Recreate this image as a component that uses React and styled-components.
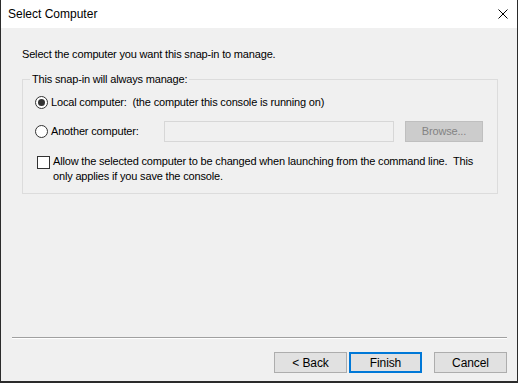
import React, { useState } from 'react';
import styled, { createGlobalStyle } from 'styled-components';

const GlobalStyle = createGlobalStyle`
    html, body {
        margin: 0;
        padding: 0;
        background: #f0f0f0;
    }
    * {
        box-sizing: border-box;
    }
`;

const App = () => {
    const [target, setTarget] = useState('local');
    const [allowChange, setAllowChange] = useState(false);

    return (
        <>
            <GlobalStyle />
            <Window>
                <TitleBar>
                    <Title>Select Computer</Title>
                    <CloseButton aria-label="Close">
                        <svg width="10" height="10" viewBox="0 0 10 10">
                            <path d="M0.5 0.5 L9.5 9.5 M9.5 0.5 L0.5 9.5" stroke="#000" strokeWidth="1" />
                        </svg>
                    </CloseButton>
                </TitleBar>
                <Body>
                    <Intro>Select the computer you want this snap-in to manage.</Intro>
                    <Group>
                        <Legend>This snap-in will always manage:</Legend>
                        <OptionRow>
                            <Radio checked={target === 'local'} onClick={() => setTarget('local')} />
                            <Label>Local computer:&nbsp; (the computer this console is running on)</Label>
                        </OptionRow>
                        <OptionRow $gap={7}>
                            <RadioLabel>
                                <Radio checked={target === 'other'} onClick={() => setTarget('other')} />
                                <Label>Another computer:</Label>
                            </RadioLabel>
                            <TextField disabled={target !== 'other'} />
                            <BrowseButton disabled={target !== 'other'}>Browse...</BrowseButton>
                        </OptionRow>
                        <CheckRow>
                            <CheckBox checked={allowChange} onClick={() => setAllowChange(!allowChange)} />
                            <CheckText>
                                Allow the selected computer to be changed when launching from the command line.&nbsp; This
                                <br />
                                only applies if you save the console.
                            </CheckText>
                        </CheckRow>
                    </Group>
                    <Spacer />
                    <Separator />
                    <ButtonRow>
                        <DialogButton>&lt; Back</DialogButton>
                        <DialogButton $primary>Finish</DialogButton>
                        <DialogButton $spaced>Cancel</DialogButton>
                    </ButtonRow>
                </Body>
            </Window>
        </>
    );
};

const Window = styled.div`
    width: 518px;
    height: 383px;
    display: flex;
    flex-direction: column;
    border: 1px solid #2b2b2b;
    border-top: none;
    border-bottom-width: 2px;
    background: #f0f0f0;
    font-family: "Liberation Sans", Arial, sans-serif;
    font-size: 11px;
    letter-spacing: -0.17px;
    color: #000;
`;

const TitleBar = styled.div`
    height: 28px;
    flex-shrink: 0;
    display: flex;
    align-items: center;
    justify-content: space-between;
    background: #fff;
    padding: 0 9px 1px 7px;
`;

const Title = styled.div`
    font-size: 12px;
    letter-spacing: 0;
`;

const CloseButton = styled.div`
    display: flex;
    align-items: center;
    width: 10px;
    height: 10px;
`;

const Body = styled.div`
    flex: 1;
    display: flex;
    flex-direction: column;
    padding: 0 10px 8px 10px;
`;

const Intro = styled.div`
    margin: 20px 0 0 11px;
    line-height: 13px;
`;

const Group = styled.fieldset`
    margin: 12px 9px 0 11px;
    padding: 5px 0 9px 12px;
    border: 1px solid #dcdcdc;
    min-width: 0;
`;

const Legend = styled.legend`
    margin-left: -5px;
    padding: 0 2px;
    line-height: 13px;
`;

const OptionRow = styled.div`
    display: flex;
    align-items: center;
    height: 22px;
    margin-top: ${p => p.$gap || 0}px;
`;

const RadioLabel = styled.div`
    display: flex;
    align-items: center;
    width: 129px;
`;

const Radio = styled.span`
    width: 13px;
    height: 13px;
    flex-shrink: 0;
    border: 1px solid #333;
    border-radius: 50%;
    background: #fff;
    display: flex;
    align-items: center;
    justify-content: center;

    &::after {
        content: '';
        width: 7px;
        height: 7px;
        border-radius: 50%;
        background: ${p => (p.checked ? '#333' : 'transparent')};
    }
`;

const Label = styled.span`
    margin-left: 3px;
    white-space: nowrap;
`;

const TextField = styled.input`
    width: 230px;
    height: 21px;
    border: 1px solid #d7d7d7;
    background: #f0f0f0;
    outline: none;
    padding: 0 3px;
    font: inherit;
`;

const BrowseButton = styled.button`
    width: 78px;
    height: 21px;
    margin-left: 11px;
    border: 1px solid #bfbfbf;
    background: #cccccc;
    color: #838383;
    font: inherit;
    letter-spacing: inherit;
    padding: 0;
`;

const CheckRow = styled.div`
    display: flex;
    align-items: flex-start;
    margin-top: 12px;
    padding-left: 2px;
`;

const CheckBox = styled.span`
    width: 13px;
    height: 13px;
    flex-shrink: 0;
    margin-top: 2px;
    border: 1px solid #333;
    background: #fff;
`;

const CheckText = styled.div`
    margin-left: 3px;
    line-height: 15px;
    white-space: nowrap;
`;

const Spacer = styled.div`
    flex: 1;
`;

const Separator = styled.div`
    margin: 0 0 0 1px;
    height: 2px;
    border-top: 1px solid #a0a0a0;
    border-bottom: 1px solid #fff;
`;

const ButtonRow = styled.div`
    display: flex;
    justify-content: flex-end;
    gap: 2px;
    margin-top: 13px;
`;

const DialogButton = styled.button`
    width: 73px;
    height: 21px;
    padding: 0;
    margin-left: ${p => (p.$spaced ? '10px' : '0')};
    font: inherit;
    font-size: 12px;
    letter-spacing: -0.1px;
    color: #000;
    background: #e1e1e1;
    border: ${p => (p.$primary ? '2px solid #0078d7' : '1px solid #adadad')};
`;

export default App;
